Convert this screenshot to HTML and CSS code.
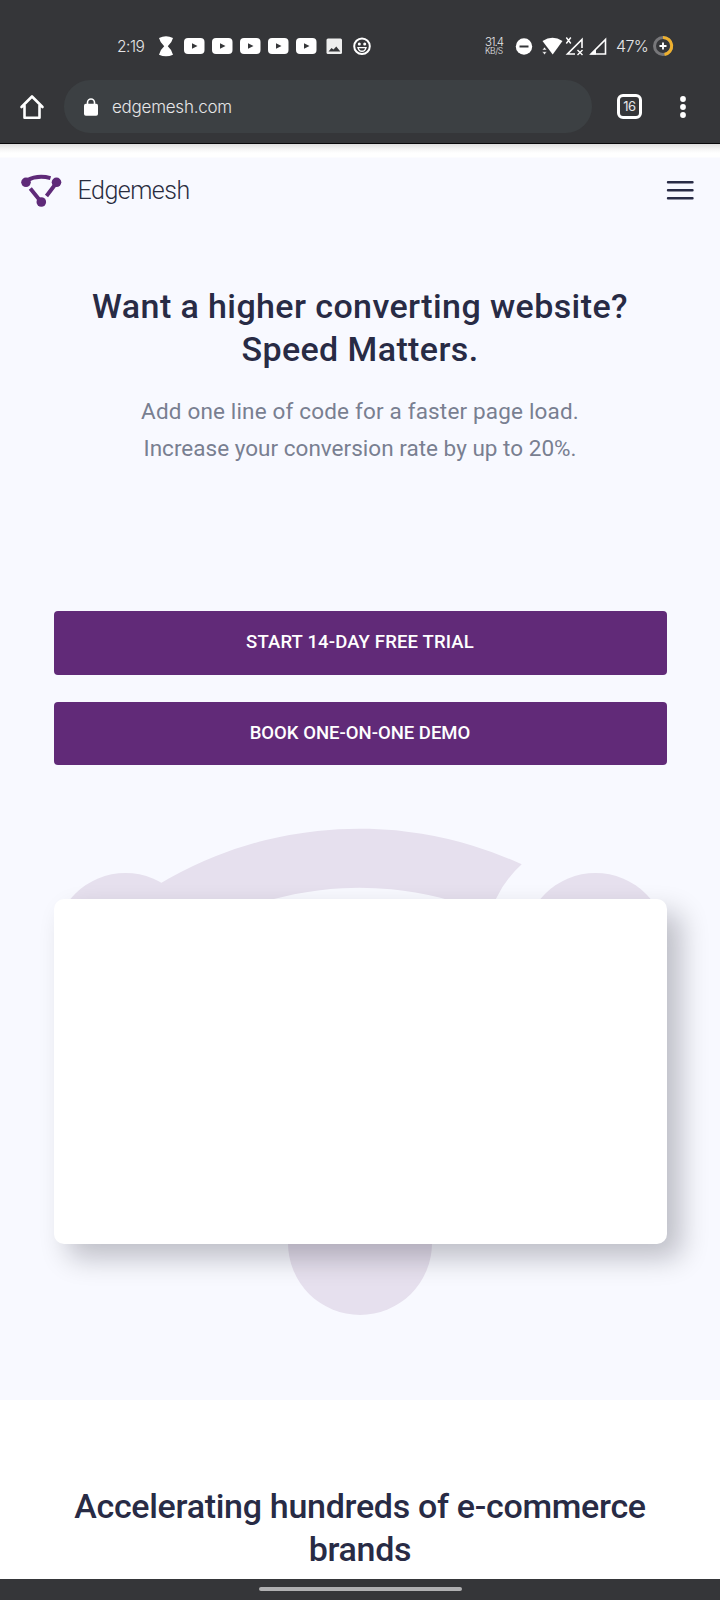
FILE: index.html
```html
<!DOCTYPE html>
<html lang="en">
<head>
<meta charset="utf-8">
<title>Edgemesh</title>
<link rel="stylesheet" href="styles.css">
</head>
<body>
<div class="screen">
  <div class="chrome">
    <div class="status">
      <span class="time">2:19</span>
      <svg class="status-icons" width="216" height="24" viewBox="158 34 216 24">
        <defs>
          <g id="yt"><rect width="20.5" height="16" rx="4" fill="#fff"/><path d="M8 5.200l5.500 2.800-5.500 2.800z" fill="#353639"/></g>
        </defs>
        <path d="M159 38q7-3.500 14 0q-1 4.500-5.200 8.300q4.200 3.700 5.200 8.400q-7 3.200-14 0q1-4.700 5.200-8.400q-4.200-3.800-5.200-8.300z" fill="#fff"/>
        <use href="#yt" x="184" y="38"/><use href="#yt" x="212" y="38"/><use href="#yt" x="240" y="38"/><use href="#yt" x="268" y="38"/><use href="#yt" x="296" y="38"/>
        <rect x="326.500" y="38.500" width="15.500" height="15.500" rx="1.500" fill="#eee"/>
        <path d="M328.500 51.500l3-3.500 2 1.500 2.800-3 4 5z" fill="#353639"/>
        <circle cx="362" cy="46.200" r="7.800" fill="none" stroke="#fff" stroke-width="2"/>
        <circle cx="359.300" cy="44" r="1.500" fill="#fff"/><circle cx="364.700" cy="44" r="1.500" fill="#fff"/>
        <path d="M358 47.600h8q-1 3.700-4 3.700t-4-3.700z" fill="none" stroke="#fff" stroke-width="1.400"/>
      </svg>
      <span class="speed"><b>31.4</b><i>KB/S</i></span>
      <svg class="signal-icons" width="94" height="24" viewBox="514 34 94 24">
        <circle cx="524" cy="46.500" r="8.200" fill="#fff"/><path d="M519.500 46.500h9" stroke="#353639" stroke-width="2"/>
        <path d="M542.500 41q10-6.500 20 0L552.700 54.500z" fill="#fff"/>
        <path d="M542.200 50l2.300-3 2.300 3zM542.200 51.700l2.300 3 2.300-3z" fill="#fff" stroke="#353639" stroke-width=".6"/>
        <path d="M575 54H567.500L582 39.500V48" fill="none" stroke="#fff" stroke-width="1.600"/>
        <path d="M566.300 37.500l4.500 6m0-6l-4.500 6M577.500 50l5 5m0-5l-5 5" stroke="#fff" stroke-width="1.400"/>
        <path d="M591 54L605.500 39.500V54z" fill="none" stroke="#fff" stroke-width="1.600"/>
        <path d="M590 54.500l6-6v6z" fill="#fff"/>
      </svg>
      <span class="percent">47%</span>
      <svg class="battery" width="22" height="22" viewBox="-11 -11 22 22">
        <circle r="8.500" fill="none" stroke="#77777a" stroke-width="3"/>
        <path d="M0-8.500A8.500 8.500 0 0 1 1.500 8.400" fill="none" stroke="#eeb02e" stroke-width="3"/>
        <path d="M-3.500 0h7M0-3.500v7" stroke="#fff" stroke-width="1.900"/>
      </svg>
    </div>
    <div class="toolbar">
      <svg class="home" width="26" height="28" viewBox="19 93 26 28">
        <path d="M21.500 107L32 96.500 42.500 107M24.500 105.500V117.700H39.500V105.500" fill="none" stroke="#fff" stroke-width="2.600" stroke-linejoin="round" stroke-linecap="round"/>
      </svg>
      <div class="address">
        <svg width="14" height="18" viewBox="0 0 14 18"><path d="M3.500 7V4.500a3.500 3.500 0 0 1 7 0V7" fill="none" stroke="#fff" stroke-width="1.600"/><rect y="5.800" width="14" height="12" rx="1.800" fill="#fff"/></svg>
        <span class="url">edgemesh.com</span>
      </div>
      <span class="tabs">16</span>
      <svg class="more" width="8" height="24" viewBox="-4 -12 8 24"><g fill="#fff"><circle cy="-8" r="2.900"/><circle r="2.900"/><circle cy="8" r="2.900"/></g></svg>
    </div>
  </div>
  <main class="hero">
    <header class="site-header">
      <svg class="logo" width="42" height="34" viewBox="20 173 42 34">
        <g fill="#5f2a79"><circle cx="26" cy="182.300" r="4.800"/><circle cx="56.500" cy="182.300" r="4.800"/><circle cx="41.300" cy="202" r="4.800"/></g>
        <path d="M26.500 180.500Q38 174.500 50.500 178.200" fill="none" stroke="#5f2a79" stroke-width="3.900"/>
        <path d="M30.300 188.500L40 200.500M54.800 185L46.500 196" fill="none" stroke="#5f2a79" stroke-width="3.900"/>
      </svg>
      <span class="brand">Edgemesh</span>
      <svg class="menu" width="28" height="20" viewBox="0 0 28 20"><path d="M2 2.200H26.500M2 10.200H26.500M2 18.200H26.500" stroke="#292c46" stroke-width="2.400" stroke-linecap="round"/></svg>
    </header>
    <h1 class="title">Want a higher converting website?<br>Speed Matters.</h1>
    <p class="lead"><span class="lead-a">Add one line of code for a faster page load.</span><br><span class="lead-b">Increase your conversion rate by up to 20%.</span></p>
    <div class="actions">
      <a class="button trial">START 14-DAY FREE TRIAL</a>
      <a class="button demo">BOOK ONE-ON-ONE DEMO</a>
    </div>
    <div class="media">
      <svg class="watermark" width="720" height="500" viewBox="0 820 720 500">
        <g fill="#e6e0ee">
          <circle cx="125.500" cy="944.500" r="71.500"/><circle cx="595.500" cy="944.500" r="71.500"/><circle cx="360" cy="1243" r="72"/>
          <path d="M125 907.300A388 388 0 0 1 521.700 864.300A110 110 0 0 0 485.600 940V912.900A329 329 0 0 0 125 986z"/>
        </g>
      </svg>
      <div class="card"></div>
    </div>
  </main>
  <section class="brands"><h2 class="title title-brands">Accelerating hundreds of e-commerce<br>brands</h2></section>
  <div class="navbar"><div class="handle"></div></div>
</div>
</body>
</html>
```
FILE: styles.css
```css
* { box-sizing: border-box; }
body { margin: 0; background: #fff; font-family: Roboto, "Liberation Sans", sans-serif; }
svg { display: block; flex: none; }
.screen { width: 720px; height: 1600px; overflow: hidden; display: flex; flex-direction: column; }
.chrome { height: 144px; flex: none; background: #353639; border-bottom: 1px solid #08080a; color: #e6e6e8; font-family: Inter, "Liberation Sans", sans-serif; }
.status { height: 80px; padding: 12px 46px 0 117px; display: flex; align-items: center; font-weight: 300; white-space: nowrap; }
.time { width: 41px; font-size: 15.5px; letter-spacing: -0.5px; }
.speed { width: 29px; margin-left: 111px; display: flex; flex-direction: column; line-height: 9px; }
.speed b { font-size: 11.500px; font-weight: 300; letter-spacing: -1px; line-height: 10px; }
.speed i { font-size: 8.500px; font-style: normal; letter-spacing: -0.4px; }
.percent { width: 36px; margin-left: 8px; font-size: 16px; letter-spacing: -0.6px; }
.toolbar { height: 53px; padding: 0 33px 0 19px; display: flex; align-items: center; }
.address { width: 528px; height: 53px; margin-left: 19px; padding-left: 20px; border-radius: 27px; background: #3c4043; display: flex; align-items: center; gap: 14px; font-size: 17px; }
.url { letter-spacing: -0.25px; font-weight: 300; }
.tabs { width: 25px; height: 25px; margin-left: 25px; border: 3px solid #fff; border-radius: 6px; font-size: 13px; line-height: 19px; text-align: center; letter-spacing: -0.5px; }
.more { margin-left: 36.500px; }
.hero { height: 1256px; flex: none; background: linear-gradient(#dedede 0, #f5f5f5 5px, #fff 9px, #fff 13px, #f8f9ff 14px); }
.site-header { height: 92px; padding: 0 26px 0 20px; display: flex; align-items: center; }
.brand { margin-left: 15.500px; flex: 1; font-size: 25px; font-weight: 300; letter-spacing: -0.5px; color: #292c3e; }
.title { margin: 0; padding-top: 48.500px; text-align: center; color: #282b45; font-size: 34px; font-weight: 500; line-height: 43px; letter-spacing: 0.4px; white-space: nowrap; }
.lead { margin: 22.500px 0 0; text-align: center; color: #797f91; font-size: 22.500px; line-height: 37px; white-space: nowrap; }
.lead-a { letter-spacing: 0.17px; }
.lead-b { letter-spacing: 0.02px; }
.actions { margin-top: 144px; padding: 0 53.5px; display: flex; flex-direction: column; gap: 27px; }
.button { height: 63.500px; border-radius: 4px; background: #612a78; color: #fff; font-size: 18.500px; font-weight: 500; line-height: 63px; text-align: center; }
.trial { letter-spacing: 0.16px; }
.media { position: relative; padding: 134px 53.5px 0; }
.watermark { position: absolute; left: 0; top: 55px; }
.card { position: relative; height: 345px; border-radius: 10px; background: #fff; box-shadow: 14px 14px 28px rgba(0, 0, 16, 0.24); }
.brands { height: 179px; flex: none; background: #fff; }
.title-brands { padding-top: 85px; letter-spacing: -0.3px; }
.navbar { height: 21px; flex: none; padding-top: 8px; background: #353639; }
.handle { width: 203px; height: 4px; margin: 0 auto; border-radius: 2px; background: #b0b0b2; }
```
